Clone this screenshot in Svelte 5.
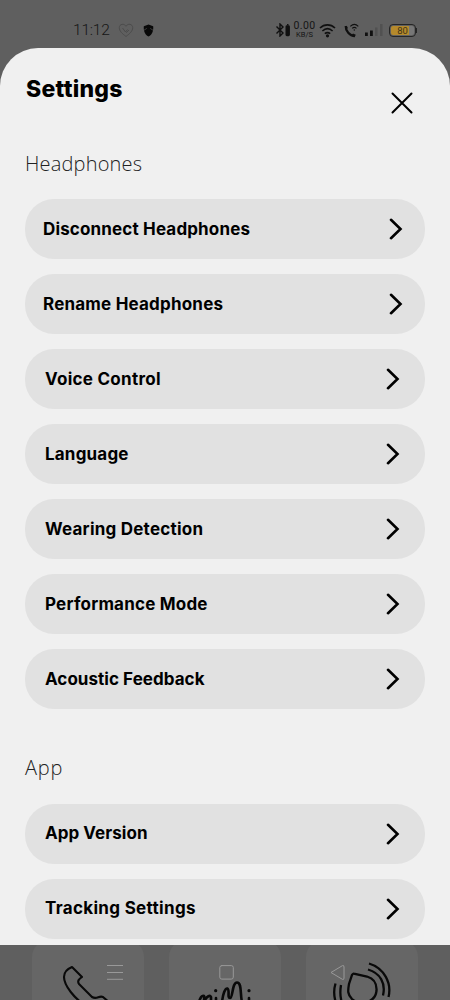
<script>
  const sections = [
    {
      title: 'Headphones',
      width: 117,
      items: [
        { label: 'Disconnect Headphones', wide: true, width: 207 },
        { label: 'Rename Headphones', wide: true, width: 180 },
        { label: 'Voice Control', width: 115.5 },
        { label: 'Language', width: 83.5 },
        { label: 'Wearing Detection', width: 158 },
        { label: 'Performance Mode', width: 162.5 },
        { label: 'Acoustic Feedback', width: 159.5 }
      ]
    },
    {
      title: 'App',
      width: 37.5,
      items: [
        { label: 'App Version', width: 102.5 },
        { label: 'Tracking Settings', width: 150.5 }
      ]
    }
  ];

  let open = true;

  function close() {
    open = false;
  }
</script>

<div class="screen">
  <header class="status">
    <span class="time">11:12</span>
    <svg class="heart" width="16" height="15" viewBox="0 0 16 15" fill="none" stroke="#4c4c4c" stroke-width="1">
      <path d="M8 13.5C4 10.5 1.3 8 1.3 4.7C1.3 0.7 6.4 0.2 8 3.3C9.6 0.2 14.7 0.7 14.7 4.7C14.7 8 12 10.5 8 13.5Z" />
      <path d="M4.5 5L7.5 9L9.5 6.5M6.5 7.5L8.5 9.5L11 7" />
    </svg>
    <svg class="shield" width="11" height="13" viewBox="0 0 11 13">
      <path d="M5.5 0.5L10.2 2.2C10.5 6.5 9.5 10.5 5.5 12.5C1.5 10.5 0.5 6.5 0.8 2.2Z" fill="#080808" />
      <path d="M1 6.2L3.8 4.4M10 6.2L7.2 4.4" stroke="#484848" stroke-width="0.8" />
    </svg>

    <svg class="bluetooth" width="16" height="14" viewBox="0 0 16 14" fill="none" stroke="#101010" stroke-width="1.4">
      <path d="M1.5 3.5L8 10L5 13V1L8 4L1.5 10.5" />
      <rect x="11.2" y="3" width="3" height="9.5" rx="0.7" fill="#101010" />
      <path d="M12 1.8H13.5" />
    </svg>
    <span class="speed"><b>0.00</b><small>KB/S</small></span>
    <svg class="wifi" width="17" height="15" viewBox="0 0 17 15" fill="none" stroke="#101010" stroke-width="1.6">
      <path d="M1 5C5.3 0.8 11.7 0.8 16 5M3.4 8C6.5 5.2 10.5 5.2 13.6 8M5.8 10.7C7.5 9.3 9.5 9.3 11.2 10.7" />
      <circle cx="8.5" cy="12.8" r="0.8" fill="#101010" />
    </svg>
    <svg class="call" width="15" height="15" viewBox="0 0 15 15" fill="none" stroke="#101010">
      <path d="M1.7 3C1.5 8 5.5 12.8 11 13.2M1.8 3.2L3 5.8M8.5 11.5L11.3 12.8" stroke-width="2.2" />
      <path d="M6.3 3.3C8.8 1 12 1 14.3 3.3M8.2 5.4C9.6 4.1 11.1 4.1 12.5 5.4" stroke-width="1.1" />
      <circle cx="10.3" cy="7" r="0.7" fill="#101010" stroke="none" />
    </svg>
    <svg class="signal" width="18" height="14" viewBox="0 0 18 14">
      <rect x="0" y="9.5" width="2.8" height="3.5" fill="#101010" />
      <rect x="5" y="7.5" width="2.8" height="5.5" fill="#101010" />
      <rect x="10" y="4.5" width="2.5" height="8.5" fill="#515151" />
      <rect x="15" y="1" width="2.5" height="12" fill="#515151" />
    </svg>
    <div class="battery">80</div>
  </header>

  {#if open}
    <main class="sheet">
      <div class="heading">
        <h1>
          <svg width="97" height="27"><text x="0" y="21" textLength="96.5">Settings</text></svg>
        </h1>
        <button class="close" aria-label="Close" on:click={close}>
          <svg width="22" height="22" viewBox="0 0 22 22" fill="none" stroke="#000" stroke-width="2" stroke-linecap="round">
            <path d="M1.5 1.5L20.5 20.5M20.5 1.5L1.5 20.5" />
          </svg>
        </button>
      </div>

      {#each sections as section}
        <section>
          <h2>
            <svg width={section.width} height="27">
              <text x="0" y="19.5" textLength={section.width}>{section.title}</text>
            </svg>
          </h2>
          {#each section.items as item}
            <button class="row" class:wide={item.wide}>
              <svg class="label" width={item.width} height="24">
                <text x="0" y="17.5" textLength={item.width}>{item.label}</text>
              </svg>
              <svg width="14" height="22" viewBox="0 0 14 22" fill="none" stroke="#000" stroke-width="2.6" stroke-linecap="round">
                <path d="M2 1.8L11.5 11L2 20.2" />
              </svg>
            </button>
          {/each}
        </section>
      {/each}
    </main>
  {/if}

  <footer class="tiles">
    <div class="tile">
      <svg width="112" height="55" viewBox="0 0 112 55" fill="none" stroke="#090909" stroke-width="2.1" stroke-linejoin="round">
        <path d="M56 62C42 54 32 40 32 32C32 27 35 24 40 22L50 32C47 34 45 36 47 39L60 52C65 55 67 50 71 52L78 58" />
        <path d="M75 20.5H91M75 27.5H91M75 34.3H91" stroke="#999" stroke-width="1" />
      </svg>
    </div>
    <div class="tile">
      <svg width="112" height="55" viewBox="0 0 112 55" fill="none" stroke="#090909" stroke-width="2.6" stroke-linecap="round">
        <path d="M30 57C31 53 33 50 35 51C36 52 34 57 36 55C38 51 41 50 42 52V57M47 53V58M53 57C54 49 56 43 58.5 43.5C61 45 58 53 61 53C64 53 63 37.5 68 37.5C73 37.5 71 49 73 57M80 53V58" />
        <circle cx="46.7" cy="45.7" r="1.6" fill="#090909" stroke="none" />
        <circle cx="80" cy="45.7" r="1.6" fill="#090909" stroke="none" />
        <rect x="50.8" y="20.6" width="13.5" height="13.5" rx="2" stroke="#999" stroke-width="1" />
      </svg>
    </div>
    <div class="tile">
      <svg width="112" height="55" viewBox="0 0 112 55" fill="none" stroke="#090909" stroke-width="2.3">
        <path d="M46 30Q47 28 49 29L61 31.5C68 33.5 71 39 70.5 46C69 58 54 61 46 54C41 49 42 45 43 39Z" />
        <path d="M62 24.5C74 28 80 38 77 50.5M63 18.5C78 23 86 38 82.5 52M29.5 38.5C27.5 45 28 52 30 58M35 40C34 46 34 52 36 58" />
        <path d="M25 27.5L36.5 20.6Q38 20 38 22V33Q38 35 36.5 34.4Z" stroke="#999" stroke-width="1" />
      </svg>
    </div>
  </footer>
</div>

<style>
  :global(body) {
    margin: 0;
    overflow: hidden;
  }
  .screen {
    width: 450px;
    height: 1000px;
    background: #5f5f5f;
    display: flex;
    flex-direction: column;
    overflow: hidden;
    font-family: Inter, "Liberation Sans", sans-serif;
    color: #000;
  }
  .status {
    height: 60px;
    flex: none;
    margin-bottom: -12px;
    padding: 12px 34px 12px 73px;
    box-sizing: border-box;
    display: flex;
    align-items: center;
    color: #151515;
  }
  .status svg {
    flex: none;
  }
  .time {
    width: 45px;
    font: 300 15.5px Roboto, sans-serif;
    letter-spacing: -0.2px;
  }
  .heart {
    margin-right: 9px;
  }
  .bluetooth {
    margin-left: auto;
    margin-right: 2px;
  }
  .speed {
    width: 23px;
    display: flex;
    flex-direction: column;
    align-items: center;
    margin-right: 3px;
    font-family: Roboto, sans-serif;
  }
  .speed b {
    font-size: 10.5px;
    line-height: 10px;
    font-weight: 400;
    letter-spacing: 0.4px;
  }
  .speed small {
    font-size: 7.5px;
    line-height: 8px;
  }
  .wifi {
    margin-right: 8px;
  }
  .call {
    margin-right: 6px;
  }
  .signal {
    margin-right: 6px;
  }
  .battery {
    width: 27px;
    height: 13px;
    box-sizing: border-box;
    border: 1px solid #252525;
    border-radius: 4px;
    background: linear-gradient(to right, #b58a2c 80%, #777 80%) content-box;
    padding: 1px;
    font: 9.5px/9px Roboto, sans-serif;
    text-align: center;
    color: #403315;
    position: relative;
  }
  .battery::after {
    content: "";
    position: absolute;
    right: -2px;
    top: 3px;
    width: 1px;
    height: 5px;
    background: #252525;
  }
  .sheet {
    height: 897px;
    flex: none;
    box-sizing: border-box;
    padding: 28px 25px 0;
    border-radius: 38px 38px 0 0;
    background: #f0f0f0;
    overflow: hidden;
    z-index: 1;
  }
  .heading {
    height: 75px;
    display: flex;
    justify-content: space-between;
  }
  h1 {
    margin: 0 0 0 1px;
    font-size: 23px;
    font-weight: 800;
  }
  h1 svg,
  h2 svg {
    display: block;
    overflow: visible;
  }
  .close {
    width: 22px;
    height: 22px;
    margin: 16px 12px 0 0;
    padding: 0;
    border: 0;
    background: none;
  }
  .close svg {
    display: block;
  }
  h2 {
    margin: 0;
    height: 48.4px;
    font: 300 20px "Open Sans", sans-serif;
  }
  h2 text {
    fill: #222;
  }
  section + section {
    margin-top: 46px;
  }
  .row {
    width: 400px;
    height: 60px;
    margin: 0 0 15px;
    padding: 0 25px 0 20px;
    border: 0;
    border-radius: 29px;
    background: #e1e1e1;
    display: flex;
    justify-content: space-between;
    align-items: center;
    cursor: pointer;
  }
  .row.wide {
    padding: 0 22.5px 0 18px;
  }
  .label {
    overflow: visible;
    margin-bottom: 1px;
  }
  .label text {
    font: 700 17px Inter, sans-serif;
  }
  .tiles {
    height: 55px;
    display: flex;
    justify-content: center;
    gap: 25px;
    padding-right: 1px;
  }
  .tile {
    width: 112px;
    height: 75px;
    margin-top: -5px;
    padding-top: 5px;
    border-radius: 17px;
    background: #666;
  }
</style>
